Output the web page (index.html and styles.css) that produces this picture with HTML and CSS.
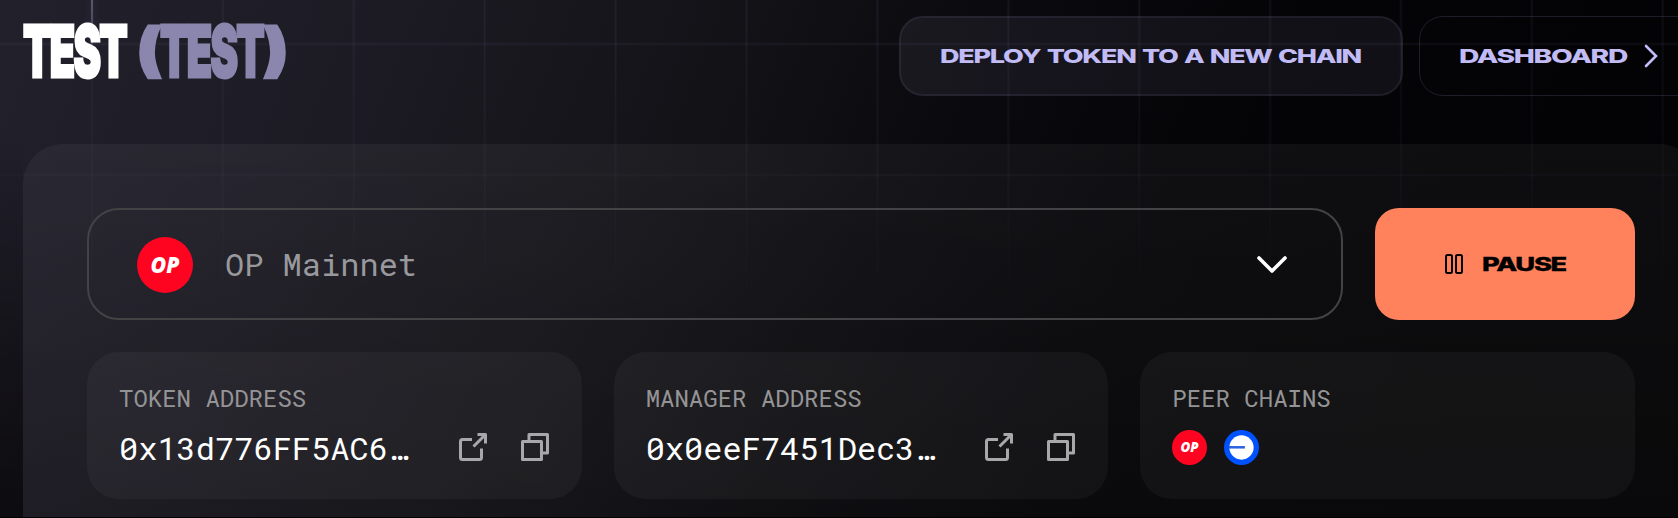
FILE: index.html
```html
<!DOCTYPE html>
<html lang="en">
<head>
<meta charset="utf-8">
<title>TEST (TEST)</title>
<link rel="stylesheet" href="styles.css">
</head>
<body>
<svg class="defs" width="0" height="0" aria-hidden="true">
  <symbol id="op" viewBox="0 0 56 56">
    <circle cx="28" cy="28" r="28" fill="#ff0420"/>
    <text class="op-text" x="13.500" y="35.500" textLength="29" lengthAdjust="spacingAndGlyphs">OP</text>
  </symbol>
  <symbol id="link" viewBox="0 0 28 28">
    <path d="M13 6.500H3.500Q1.500 6.500 1.500 8.500V24.500Q1.500 26.500 3.500 26.500H20.500Q22.500 26.500 22.500 24.500V15.500" />
    <path d="M14.500 13.500L26 2M18.500 1.500H26.500V10.500" />
  </symbol>
  <symbol id="copy" viewBox="0 0 28 28">
    <path d="M1.500 8.500H20.500V26.500H1.500ZM8 8V1.500H26.500V20H21" />
  </symbol>
</svg>
<main class="page">
  <div class="grid-lines"></div>
  <div class="beam"></div>
  <header class="header">
    <svg class="title" width="264" height="64" viewBox="0 0 264 64">
      <text class="name" x="0" y="57.500" textLength="103" lengthAdjust="spacingAndGlyphs">TEST</text>
      <text class="symbol paren" x="114" y="50.500" textLength="24" lengthAdjust="spacingAndGlyphs">(</text>
      <text class="symbol" x="137" y="57.500" textLength="103" lengthAdjust="spacingAndGlyphs">TEST</text>
      <text class="symbol paren" x="241" y="50.500" textLength="24" lengthAdjust="spacingAndGlyphs">)</text>
    </svg>
    <nav class="actions">
      <a class="action filled">
        <svg width="421" height="20"><text class="wide" x="-1" y="16.500" textLength="421" lengthAdjust="spacingAndGlyphs">DEPLOY TOKEN TO A NEW CHAIN</text></svg>
      </a>
      <a class="action outline">
        <svg width="169" height="20"><text class="wide" x="-1" y="16.500" textLength="168" lengthAdjust="spacingAndGlyphs">DASHBOARD</text></svg>
        <svg class="next" width="14" height="24" viewBox="0 0 14 24"><path d="M2 2L12 12L2 22"/></svg>
      </a>
    </nav>
  </header>
  <section class="panel">
    <div class="top-row">
      <div class="select">
        <svg width="56" height="56"><use href="#op"/></svg>
        <span class="chain">OP Mainnet</span>
        <svg class="chevron" width="30" height="18" viewBox="0 0 30 18"><path d="M2 2L15 15L28 2"/></svg>
      </div>
      <button class="pause">
        <svg class="bars" width="18" height="20" viewBox="0 0 18 20"><rect x="1" y="1" width="6" height="18" rx="1.500"/><rect x="11" y="1" width="6" height="18" rx="1.500"/></svg>
        <svg width="85" height="20"><text class="wide dark" x="-1" y="16.500" textLength="84" lengthAdjust="spacingAndGlyphs">PAUSE</text></svg>
      </button>
    </div>
    <div class="cards">
      <div class="card">
        <div class="label">TOKEN ADDRESS</div>
        <div class="value-row"><span class="value">0x13d776FF5AC6…</span>
          <span class="icons"><svg width="28" height="28"><use href="#link"/></svg><svg width="28" height="28"><use href="#copy"/></svg></span></div>
      </div>
      <div class="card">
        <div class="label">MANAGER ADDRESS</div>
        <div class="value-row"><span class="value">0x0eeF7451Dec3…</span>
          <span class="icons"><svg width="28" height="28"><use href="#link"/></svg><svg width="28" height="28"><use href="#copy"/></svg></span></div>
      </div>
      <div class="card">
        <div class="label">PEER CHAINS</div>
        <div class="peers">
          <svg width="35" height="35"><use href="#op"/></svg>
          <svg width="35" height="35" viewBox="0 0 36 36"><circle cx="18" cy="18" r="18" fill="#0052ff"/><circle cx="18" cy="18" r="12.500" fill="#fff"/><path d="M5 17.800H21.500" stroke="#2b63df" stroke-width="2.600"/></svg>
        </div>
      </div>
    </div>
  </section>
</main>
</body>
</html>
```

FILE: styles.css
```css
* { box-sizing: border-box; }
body { margin: 0; background: #020204; overflow: hidden; }
.defs { position: absolute; }
svg { display: block; flex: none; overflow: visible; }

.page {
  position: relative;
  height: 517px;
  overflow: hidden;
  background: linear-gradient(112deg, #22202b 0, #1d1b24 320px, #16151b 600px, #0c0c10 880px, #050508 1150px, #030305 1500px);
}
.page::before {
  content: "";
  position: absolute;
  inset: 0;
  background: linear-gradient(180deg, transparent 130px, rgba(0,0,0,.2));
}
.page::after {
  content: "";
  position: absolute;
  inset: 0 auto 0 0;
  width: 23px;
  background: linear-gradient(180deg, transparent 130px, rgba(0,0,0,.5));
}
.grid-lines {
  position: absolute;
  inset: 0;
  background:
    repeating-linear-gradient(90deg, transparent 0 90px, rgba(150,140,200,.045) 91px, rgba(150,140,200,.095) 92px, rgba(150,140,200,.045) 93px, transparent 94px 130.900px),
    repeating-linear-gradient(180deg, transparent 0 42px, rgba(150,140,200,.045) 43px, rgba(150,140,200,.095) 44px, rgba(150,140,200,.045) 45px, transparent 46px 131px);
  -webkit-mask: linear-gradient(180deg, #000 0, rgba(0,0,0,.6) 150px, rgba(0,0,0,.25) 250px, transparent 330px);
  mask: linear-gradient(180deg, #000 0, rgba(0,0,0,.6) 150px, rgba(0,0,0,.25) 250px, transparent 330px);
}
.beam {
  position: absolute;
  left: 91px;
  top: 0;
  width: 2px;
  height: 46px;
  background: linear-gradient(180deg, #5a566c, #403d50);
  box-shadow: 0 0 8px rgba(140,130,190,.25);
}

.header {
  position: relative;
  display: flex;
  width: 1740px;
  height: 144px;
  padding: 16px 0 0 23px;
  align-items: flex-start;
}
.title { margin-top: 3px; }
.title text {
  font: 900 72px Inter, sans-serif;
  letter-spacing: -3px;
  fill: #fff;
  stroke: #fff;
  stroke-width: 3px;
}
.title .symbol { fill: #8a86ad; stroke: #8a86ad; }
.title .paren { font-size: 57px; letter-spacing: 0; }

.actions { display: flex; gap: 16px; margin-left: 612px; }
.action {
  display: flex;
  align-items: center;
  height: 80px;
  border-radius: 24px;
}
.filled {
  width: 504px;
  padding: 0 41px 0 40px;
  border: 2px solid rgba(193,187,246,.08);
  background: rgba(193,187,246,.07);
}
.outline {
  width: 300px;
  padding-left: 40px;
  gap: 15px;
  border: 1px solid rgba(193,187,246,.14);
}
.wide {
  font: 800 19px Inter, sans-serif;
  letter-spacing: -.9px;
  word-spacing: 1.2px;
  fill: #c1bbf6;
}
.dark { fill: #000; stroke: #000; stroke-width: .3px; }
.next path { fill: none; stroke: #c1bbf6; stroke-width: 2.600; stroke-linecap: round; }

.panel {
  position: relative;
  width: 1676px;
  height: 420px;
  margin-left: 23px;
  padding: 64px;
  border-radius: 40px;
  background: linear-gradient(180deg, rgba(255,255,255,.045), rgba(255,255,255,.025));
}
.top-row { display: flex; gap: 32px; }
.select {
  display: flex;
  flex: 1;
  align-items: center;
  height: 112px;
  padding: 0 54px 0 48px;
  border: 2px solid #434345;
  border-radius: 32px;
}
.select > svg:first-child { margin-top: 1px; }
.chain, .label, .value {
  font-family: "Roboto Mono", "DejaVu Sans Mono", monospace;
  white-space: nowrap;
}
.chain {
  flex: 1;
  margin-left: 32px;
  font-size: 32px;
  line-height: 40px;
  color: #99999d;
}
.chevron { margin-top: 2px; }
.chevron path { fill: none; stroke: #fff; stroke-width: 3.600; stroke-linecap: round; stroke-linejoin: round; }
.op-text { font: italic 800 22px "Open Sans", sans-serif; fill: #fff; }
.pause {
  display: flex;
  align-items: center;
  justify-content: center;
  gap: 20px;
  width: 260px;
  height: 112px;
  padding: 0 0 0 2px;
  border: 0;
  border-radius: 24px;
  background: #ff825c;
}
.bars rect { fill: none; stroke: #000; stroke-width: 2; }

.cards {
  display: grid;
  grid-template-columns: repeat(3, 1fr);
  gap: 32px;
  margin-top: 32px;
}
.card {
  height: 147px;
  padding: 30px 32px 0;
  border-radius: 32px;
  background: rgba(255,255,255,.04);
}
.label { height: 32px; font-size: 24px; line-height: 32px; color: #949496; }
.value-row { display: flex; align-items: center; justify-content: space-between; height: 66px; }
.value { padding-top: 1px; font-size: 32px; line-height: 40px; color: #fff; }
.icons { display: flex; gap: 34px; padding-right: 1px; }
.icons svg { fill: none; stroke: #a8a8aa; stroke-width: 3; stroke-linejoin: round; }
.peers { display: flex; gap: 17px; padding-top: 16px; }
```
